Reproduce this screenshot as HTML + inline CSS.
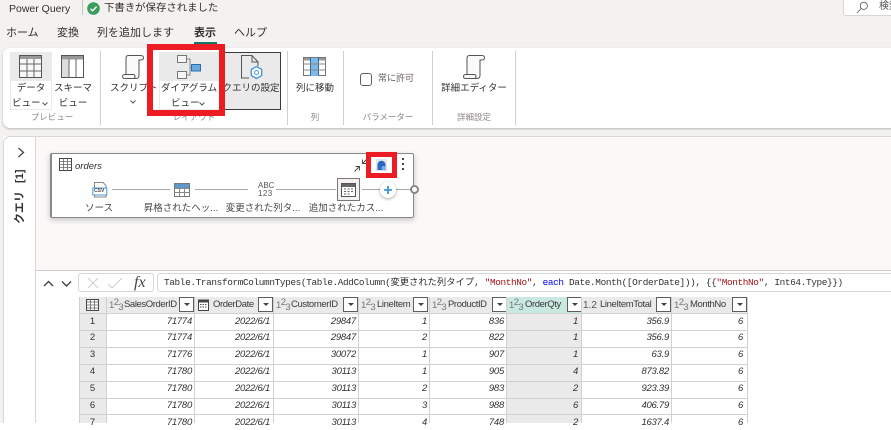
<!DOCTYPE html>
<html lang="ja"><head><meta charset="utf-8">
<style>
html,body{margin:0;padding:0}
body{width:891px;height:423px;overflow:hidden;position:relative;background:#fff;font-family:"Liberation Sans","Noto Sans CJK JP",sans-serif;color:#323130}
.a{position:absolute}
.t{position:absolute;white-space:nowrap;line-height:14px}
.c{text-align:center;transform:translateX(-50%)}
.rb{font-size:9.5px;color:#323130}
.grp{font-size:8.5px;color:#8a8886}
.sep{position:absolute;top:51px;width:1px;height:74px;background:#d0cfce}
.tab{font-size:11px;top:26px;color:#323130}
.red{position:absolute;box-sizing:border-box;border-style:solid;border-color:#ed1c24;z-index:5}
svg{position:absolute;overflow:visible}
.hc{position:absolute;top:297px;height:16px;background:#ebeaea;box-sizing:border-box;border-right:1px solid #d0d0d0;font-size:9.5px;line-height:16px;white-space:nowrap;overflow:hidden}
.hc .ty{position:absolute;left:2px;top:1px;font-size:9.5px;color:#777;letter-spacing:-.6px}
.hc .ty sup{font-size:9.5px;line-height:0;position:relative;top:-3px;vertical-align:baseline}
.hc .ty sub{font-size:9.5px;line-height:0;position:relative;top:2px;vertical-align:baseline}
.hc .n{position:absolute;top:0;letter-spacing:-.4px;color:#3b3a39}
.hc .dd{position:absolute;top:0;width:15px;height:15px;box-sizing:border-box;border:1px solid #605e5c;background:#fff}
.hc .dd:after{content:"";position:absolute;left:3.5px;top:5px;border-left:3px solid transparent;border-right:3px solid transparent;border-top:3px solid #444}
.vl{position:absolute;top:313px;width:1px;height:110px;background:#d0d0d0}
.hl{position:absolute;left:79px;width:669px;height:1px;background:#d0d0d0}
.num{position:absolute;text-align:right;font-size:9.5px;font-style:italic;line-height:14px;color:#323130;white-space:nowrap;letter-spacing:-.25px}
.rn{position:absolute;left:79px;width:27px;text-align:center;font-size:9.5px;line-height:14px;color:#323130}
.step{font-size:9.5px;color:#484644}
</style></head><body>
<!-- top chrome -->
<div class="a" style="left:0;top:0;width:891px;height:136px;background:#f3f2f1"></div>
<div class="t" style="left:9px;top:2px;font-size:10.5px;color:#323130">Power Query</div>
<div class="a" style="left:82px;top:0;width:1px;height:15px;background:#c8c6c4"></div>
<svg style="left:87px;top:2px" width="13" height="13" viewBox="0 0 13 13"><circle cx="6.5" cy="6.5" r="6.3" fill="#3a9d5d"/><path d="M3.5 6.7l2.1 2.1 4-4.2" fill="none" stroke="#fff" stroke-width="1.4"/></svg>
<div class="t" style="left:104px;top:2px;font-size:10.4px;color:#323130">下書きが保存されました</div>
<div class="a" style="left:843px;top:-4px;width:60px;height:20px;background:#fff;border:1px solid #d8d6d4;border-radius:3px;box-sizing:border-box"></div>
<svg style="left:856px;top:1px" width="13" height="13" viewBox="0 0 13 13"><circle cx="7.8" cy="4.8" r="3.6" fill="none" stroke="#666" stroke-width=".9"/><path d="M5.2 7.4L1 12" stroke="#666" stroke-width=".9"/></svg>
<div class="t" style="left:879px;top:0;font-size:10px;color:#555">検索</div>
<div class="t tab" style="left:6px">ホーム</div>
<div class="t tab" style="left:57px">変換</div>
<div class="t tab" style="left:97px">列を追加します</div>
<div class="t tab" style="left:194px;font-weight:700">表示</div>
<div class="a" style="left:194px;top:42px;width:23px;height:2px;background:#117865"></div>
<div class="t tab" style="left:234px">ヘルプ</div>

<!-- ribbon -->
<div class="a" style="left:3px;top:48px;width:900px;height:80px;background:#fff;border-radius:7px 0 0 7px;box-shadow:0 1px 2px rgba(0,0,0,.25)"></div>
<div class="a" style="left:10px;top:52px;width:42px;height:58px;background:#ebeaea"></div>
<div class="a" style="left:11px;top:81px;width:40px;height:28px;background:#fff"></div>
<svg style="left:19px;top:55px" width="24" height="24" viewBox="0 0 24 24"><rect x=".5" y=".5" width="22" height="22" fill="#f8f8f8" stroke="#555"/><rect x="1" y="1" width="21" height="3" fill="#999"/><path d="M1 9h21M1 16h21M8 4v18M15 4v18" stroke="#666"/></svg>
<svg style="left:61px;top:55px" width="24" height="24" viewBox="0 0 24 24"><rect x=".5" y=".5" width="22" height="22" fill="#fff" stroke="#555"/><rect x="1" y="1" width="21" height="3.5" fill="#999"/><rect x="1" y="5" width="7" height="17" fill="#ddd"/><path d="M8 4v18M15 4v18" stroke="#666"/></svg>
<div class="t rb c" style="left:31px;top:82px">データ</div>
<div class="t rb" style="left:12px;top:97px">ビュー</div>
<svg style="left:42px;top:102px" width="6" height="4" viewBox="0 0 6 4"><path d="M.5.5L3 3 5.500.5" fill="none" stroke="#555"/></svg>
<div class="t rb c" style="left:73px;top:82px">スキーマ</div>
<div class="t rb c" style="left:73px;top:97px">ビュー</div>
<div class="t grp c" style="left:52px;top:110px">プレビュー</div>
<div class="sep" style="left:100px"></div>

<svg style="left:122px;top:55px" width="22" height="24" viewBox="0 0 22 24"><path d="M4 3C4 1.500 5 .5 6.500 .5H19c1.500 0 2.500 1 2.500 2.300S20.500 5 19 5H17V20c0 2-1 3.500-3 3.500H2.500C1.200 23.500 .5 22.500 .5 21.500s.7-2 2-2H4Z" fill="#fafafa" stroke="#555"/><path d="M4 19.500H11c1.500 0 2 1 2 2s-.5 2-1.500 2" fill="none" stroke="#555"/></svg>
<div class="t rb" style="left:110px;top:82px">スクリプト</div>
<svg style="left:130px;top:100px" width="6" height="4" viewBox="0 0 6 4"><path d="M.5.5L3 3 5.500.5" fill="none" stroke="#555"/></svg>

<div class="a" style="left:159px;top:52px;width:61px;height:58px;background:#ebeaea"></div>
<div class="a" style="left:160px;top:81px;width:59px;height:28px;background:#fff"></div>
<svg style="left:176px;top:54px" width="27" height="25" viewBox="0 0 27 25"><rect x="1.500" y="1.500" width="9" height="7" fill="#f5f5f5" stroke="#777"/><rect x="1.500" y="17.500" width="9" height="7" fill="#f5f5f5" stroke="#777"/><path d="M11 5h3V21H11M14 13.500H15.500" fill="none" stroke="#888"/><rect x="15.500" y="10.500" width="9" height="6.500" fill="#6aa9e0" stroke="#2a6fb0"/></svg>
<div class="t rb c" style="left:189px;top:82px">ダイアグラム</div>
<div class="t rb" style="left:171px;top:97px">ビュー</div>
<svg style="left:199px;top:102px" width="6" height="4" viewBox="0 0 6 4"><path d="M.5.5L3 3 5.500.5" fill="none" stroke="#555"/></svg>

<div class="a" style="left:220px;top:52px;width:61px;height:58px;box-sizing:border-box;background:#ebeaea;border:1px solid #3b3a39;border-left:0"></div>
<svg style="left:241px;top:55px" width="24" height="26" viewBox="0 0 24 26"><path d="M8 23H.5V.5H11L17 7V11" fill="none" stroke="#555"/><path d="M11 .5V7H17" fill="none" stroke="#555"/><path d="M15.500 11.500L20.700 14.500V20.500L15.500 23.500 10.300 20.500V14.500Z" fill="#fff" stroke="#4a9ad4" stroke-width="1.400" stroke-linejoin="round"/><circle cx="15.500" cy="17.500" r="2" fill="none" stroke="#4a9ad4"/></svg>
<div class="t rb c" style="left:251px;top:82px">クエリの設定</div>
<div class="t grp c" style="left:194px;top:110px">レイアウト</div>
<div class="sep" style="left:287px"></div>

<svg style="left:303px;top:57px" width="24" height="20" viewBox="0 0 24 20"><rect x=".5" y=".5" width="22" height="18" fill="#fff" stroke="#777"/><rect x="1" y="1" width="21" height="2.500" fill="#999"/><rect x="7.500" y="1" width="8" height="18" fill="#7fb8e6"/><path d="M7.500 .5v18M15.500 .5v18" stroke="#1f6fb5"/><path d="M1 7h21M1 13h21" stroke="#888"/></svg>
<div class="t rb c" style="left:315px;top:82px">列に移動</div>
<div class="t grp c" style="left:315px;top:110px">列</div>
<div class="sep" style="left:343px"></div>

<div class="a" style="left:360px;top:73px;width:12px;height:13px;box-sizing:border-box;border:1px solid #605e5c;border-radius:3px"></div>
<div class="t" style="left:378px;top:71px;font-size:9px;color:#605e5c">常に許可</div>
<div class="t grp c" style="left:388px;top:110px">パラメーター</div>
<div class="sep" style="left:432px"></div>

<svg style="left:463px;top:55px" width="22" height="24" viewBox="0 0 22 24"><path d="M4 3C4 1.500 5 .5 6.500 .5H19c1.500 0 2.500 1 2.500 2.300S20.500 5 19 5H17V20c0 2-1 3.500-3 3.500H2.500C1.200 23.500 .5 22.500 .5 21.500s.7-2 2-2H4Z" fill="#fafafa" stroke="#555"/><path d="M4 19.500H11c1.500 0 2 1 2 2s-.5 2-1.500 2" fill="none" stroke="#555"/></svg>
<div class="t rb c" style="left:474px;top:82px">詳細エディター</div>
<div class="t grp c" style="left:474px;top:110px">詳細設定</div>
<div class="sep" style="left:515px"></div>

<!-- red boxes -->
<div class="red" style="left:147px;top:44px;width:78px;height:72px;border-width:6px"></div>
<div class="red" style="left:366px;top:152px;width:31px;height:26px;border-width:5px"></div>

<!-- side panel + diagram bg -->
<div class="a" style="left:0;top:136px;width:3px;height:287px;background:#f3f2f1"></div>
<div class="a" style="left:3px;top:136px;width:33px;height:287px;background:#fff;border-radius:7px 0 0 0;border-top:1px solid #d8d6d4;border-left:1px solid #d8d6d4;border-right:1px solid #d8d6d4;box-sizing:border-box"></div>
<div class="a" style="left:36px;top:136px;width:855px;height:134px;background:#faf9f8;border-top:1px solid #d8d6d4;box-sizing:border-box"></div>
<div class="a" style="left:36px;top:270px;width:855px;height:1px;background:#d0cfce"></div>
<svg style="left:17px;top:147px" width="8" height="11" viewBox="0 0 8 11"><path d="M1.500 1l5 4.500-5 4.500" fill="none" stroke="#444" stroke-width="1.300"/></svg>
<div class="t" style="left:13px;top:224px;font-size:11px;font-weight:700;color:#323130;transform-origin:0 0;transform:rotate(-90deg);line-height:14px;word-spacing:5px">クエリ [1]</div>

<!-- query card -->
<div class="a" style="left:50px;top:153px;width:364px;height:65px;box-sizing:border-box;background:#fff;border:1px solid #8a8886;border-left:2px solid #8a8886;border-radius:2px;box-shadow:0 2px 6px rgba(0,0,0,.22)"></div>
<svg style="left:59px;top:158px" width="13" height="13" viewBox="0 0 13 13"><rect x=".5" y=".5" width="12" height="12" fill="#fff" stroke="#444"/><path d="M.5 3.500h12M.5 6.500h12M.5 9.500h12M4.500 .5v12M8.500 .5v12" stroke="#666" stroke-width=".8"/></svg>
<div class="t" style="left:75px;top:160px;font-size:9.500px;font-style:italic;color:#323130">orders</div>
<svg style="left:92px;top:182px" width="16" height="16" viewBox="0 0 16 16"><path d="M2.500.5H11L14 3.500V15H2.500Z" fill="#fff" stroke="#888"/><rect x=".8" y="6" width="14" height="7" fill="#fff" stroke="#4a9ad4"/></svg>
<div class="t" style="left:94px;top:188px;font-size:5px;font-weight:700;color:#444;line-height:7px">CSV</div>
<div class="a" style="left:112px;top:189px;width:58px;height:1px;background:#a8a8a8"></div>
<svg style="left:174px;top:183px" width="16" height="14" viewBox="0 0 16 14"><rect x=".5" y=".5" width="15" height="13" fill="#fff" stroke="#777"/><rect x="1" y="1" width="14" height="4.500" fill="#5a9bd5"/><path d="M.5 5.500h15M.5 9.500h15M5.500 .5v13M10.500 .5v13" stroke="#888"/></svg>
<div class="a" style="left:195px;top:189px;width:53px;height:1px;background:#a8a8a8"></div>
<div class="t" style="left:258px;top:182px;font-size:8px;line-height:8px;color:#555">ABC</div>
<div class="t" style="left:258px;top:190px;font-size:8px;line-height:8px;color:#555;letter-spacing:.4px">123</div>
<div class="a" style="left:276px;top:189px;width:60px;height:1px;background:#a8a8a8"></div>
<div class="a" style="left:337px;top:178px;width:23px;height:23px;box-sizing:border-box;border:1px solid #777;background:#f3f2f1"></div>
<svg style="left:341px;top:182px" width="15" height="15" viewBox="0 0 15 15"><rect x=".5" y="1.500" width="14" height="13" fill="#fff" stroke="#555"/><rect x="1" y="2" width="13" height="3" fill="#666"/><path d="M3 7h2M6.500 7h2M10 7h2M3 9.500h2M6.500 9.500h2M10 9.500h2M3 12h2M6.500 12h2" stroke="#666"/></svg>
<div class="a" style="left:362px;top:189px;width:48px;height:1px;background:#a8a8a8"></div>
<div class="a" style="left:380px;top:182px;width:16px;height:16px;border-radius:50%;background:#fff;box-shadow:0 1px 3px rgba(0,0,0,.35)"></div>
<svg style="left:384px;top:186px" width="8" height="8" viewBox="0 0 8 8"><path d="M4 0v8M0 4h8" stroke="#3a96dd" stroke-width="1.800"/></svg>
<div class="a" style="left:410px;top:185px;width:9px;height:9px;border-radius:50%;box-sizing:border-box;border:2px solid #8a8886;background:#fff"></div>
<div class="t step c" style="left:99px;top:202px">ソース</div>
<div class="t step c" style="left:181px;top:202px">昇格されたヘッ...</div>
<div class="t step c" style="left:263px;top:202px">変更された列タ...</div>
<div class="t step c" style="left:346px;top:202px">追加されたカス...</div>
<svg style="left:354px;top:158px" width="14" height="14" viewBox="0 0 14 14"><path d="M.5 13.500L5.500 8.500M1.500 8.500H5.500V12.500M13.500 .5L8.500 5.500M8.500 1.500V5.500H12.500" fill="none" stroke="#444" stroke-width=".9"/></svg>
<div class="a" style="left:376px;top:159px;width:11px;height:12px;background:#e6e5e4"></div>
<svg style="left:376px;top:160px" width="11" height="11" viewBox="0 0 11 11"><path d="M1.500 10V5C1.500 2.500 3.500 .8 5.500 .8S9.500 2.500 9.500 5V10Z" fill="#2a66c4"/><circle cx="7.500" cy="8" r="2" fill="#7eaee8"/></svg>
<div class="a" style="left:402px;top:158px;width:2px;height:2px;background:#444"></div>
<div class="a" style="left:402px;top:163px;width:2px;height:2px;background:#444"></div>
<div class="a" style="left:402px;top:168px;width:2px;height:2px;background:#444"></div>

<!-- formula bar -->
<svg style="left:43px;top:279px" width="30" height="9" viewBox="0 0 30 9"><path d="M1 7l4.500-4.500L10 7M19 2.500L23.500 7 28 2.500" fill="none" stroke="#444" stroke-width="1.400"/></svg>
<div class="a" style="left:78px;top:273px;width:76px;height:19px;box-sizing:border-box;border:1px solid #d8d6d4;border-radius:3px;background:#fff"></div>
<svg style="left:87px;top:277px" width="40" height="12" viewBox="0 0 40 12"><path d="M1 1l10 10M11 1L1 11M21 7l4 4 10-10" fill="none" stroke="#d0cfce"/></svg>
<div class="t" style="left:134px;top:276px;font-family:'Liberation Serif',serif;font-style:italic;font-size:16px;color:#444">fx</div>
<div class="a" style="left:157px;top:273px;width:740px;height:19px;box-sizing:border-box;border:1px solid #d8d6d4;border-radius:3px;background:#fff"></div>
<div class="t" style="left:164px;top:276px;font-family:'Liberation Mono','Noto Sans CJK JP',monospace;font-size:9.400px;letter-spacing:-.36px;color:#323130">Table.TransformColumnTypes(Table.AddColumn(<span style="font-size:9.300px;letter-spacing:0">変更された列タイプ</span>, <span style="color:#a31515">"MonthNo"</span>, <span style="color:#0000ff">each</span> Date.Month([OrderDate])), {{<span style="color:#a31515">"MonthNo"</span>, Int64.Type}})</div>

<!-- grid -->
<div class="a" style="left:79px;top:297px;width:28px;height:126px;background:#ebeaea"></div>
<div class="a" style="left:507px;top:313px;width:74px;height:110px;background:#ebeaea"></div>
<div class="hc" style="left:79px;width:28px"></div>
<svg style="left:86px;top:299px" width="13" height="12" viewBox="0 0 13 12"><rect x=".5" y=".5" width="12" height="11" fill="#fff" stroke="#444"/><path d="M.5 3h12M.5 6h12M.5 9h12M4.500 .5v11M8.500 .5v11" stroke="#666" stroke-width=".8"/></svg>

<div class="hc" style="left:107px;width:88px"><span class="ty">1<sup>2</sup><sub>3</sub></span><span class="n" style="left:17px">SalesOrderID</span><span class="dd" style="left:72px"></span></div>
<div class="hc" style="left:195px;width:79px"><span class="n" style="left:18px">OrderDate</span><span class="dd" style="left:63px"></span></div>
<svg style="left:198px;top:299px" width="11" height="12" viewBox="0 0 11 12"><rect x=".5" y="1" width="10" height="10.500" fill="#fff" stroke="#444"/><rect x="1" y="1" width="9" height="2.500" fill="#444"/><path d="M2 5.500h1.500M4.500 5.500h1.500M7 5.500h1.500M2 8h1.500M4.500 8h1.500M7 8h1.500" stroke="#555"/></svg>
<div class="hc" style="left:274px;width:85px"><span class="ty">1<sup>2</sup><sub>3</sub></span><span class="n" style="left:17px">CustomerID</span><span class="dd" style="left:69px"></span></div>
<div class="hc" style="left:359px;width:71px"><span class="ty">1<sup>2</sup><sub>3</sub></span><span class="n" style="left:18px">LineItem</span><span class="dd" style="left:54px"></span></div>
<div class="hc" style="left:430px;width:77px"><span class="ty">1<sup>2</sup><sub>3</sub></span><span class="n" style="left:18px">ProductID</span><span class="dd" style="left:62px"></span></div>
<div class="hc" style="left:507px;width:75px;background:#c9e9e0"><span class="ty">1<sup>2</sup><sub>3</sub></span><span class="n" style="left:18px">OrderQty</span><span class="dd" style="left:60px"></span></div>
<div class="hc" style="left:582px;width:90px"><span class="ty" style="font-size:10px;letter-spacing:0;left:1px;color:#555">1.2</span><span class="n" style="left:18px">LineItemTotal</span><span class="dd" style="left:74px"></span></div>
<div class="hc" style="left:672px;width:76px"><span class="ty">1<sup>2</sup><sub>3</sub></span><span class="n" style="left:18px">MonthNo</span><span class="dd" style="left:60px"></span></div>

<div class="hl" style="top:313px"></div><div class="hl" style="top:330px"></div><div class="hl" style="top:347px"></div><div class="hl" style="top:364px"></div><div class="hl" style="top:381px"></div><div class="hl" style="top:398px"></div><div class="hl" style="top:414px"></div>
<div class="vl" style="left:106px"></div><div class="vl" style="left:194px"></div><div class="vl" style="left:273px"></div><div class="vl" style="left:358px"></div><div class="vl" style="left:429px"></div><div class="vl" style="left:506px"></div><div class="vl" style="left:581px"></div><div class="vl" style="left:671px"></div><div class="vl" style="left:747px"></div>
<div class="a" style="left:79px;top:297px;width:1px;height:126px;background:#d0d0d0"></div>

<div class="rn" style="top:315px">1</div><div class="rn" style="top:331px">2</div><div class="rn" style="top:348px">3</div><div class="rn" style="top:365px">4</div><div class="rn" style="top:382px">5</div><div class="rn" style="top:399px">6</div><div class="rn" style="top:416px">7</div>

<!-- rows -->
<div class="num" style="right:699px;top:315px">71774</div><div class="num" style="right:621px;top:315px">2022/6/1</div><div class="num" style="right:535px;top:315px">29847</div><div class="num" style="right:464px;top:315px">1</div><div class="num" style="right:387px;top:315px">836</div><div class="num" style="right:313px;top:315px">1</div><div class="num" style="right:222px;top:315px">356.9</div><div class="num" style="right:148px;top:315px">6</div>
<div class="num" style="right:699px;top:331px">71774</div><div class="num" style="right:621px;top:331px">2022/6/1</div><div class="num" style="right:535px;top:331px">29847</div><div class="num" style="right:464px;top:331px">2</div><div class="num" style="right:387px;top:331px">822</div><div class="num" style="right:313px;top:331px">1</div><div class="num" style="right:222px;top:331px">356.9</div><div class="num" style="right:148px;top:331px">6</div>
<div class="num" style="right:699px;top:348px">71776</div><div class="num" style="right:621px;top:348px">2022/6/1</div><div class="num" style="right:535px;top:348px">30072</div><div class="num" style="right:464px;top:348px">1</div><div class="num" style="right:387px;top:348px">907</div><div class="num" style="right:313px;top:348px">1</div><div class="num" style="right:222px;top:348px">63.9</div><div class="num" style="right:148px;top:348px">6</div>
<div class="num" style="right:699px;top:365px">71780</div><div class="num" style="right:621px;top:365px">2022/6/1</div><div class="num" style="right:535px;top:365px">30113</div><div class="num" style="right:464px;top:365px">1</div><div class="num" style="right:387px;top:365px">905</div><div class="num" style="right:313px;top:365px">4</div><div class="num" style="right:222px;top:365px">873.82</div><div class="num" style="right:148px;top:365px">6</div>
<div class="num" style="right:699px;top:382px">71780</div><div class="num" style="right:621px;top:382px">2022/6/1</div><div class="num" style="right:535px;top:382px">30113</div><div class="num" style="right:464px;top:382px">2</div><div class="num" style="right:387px;top:382px">983</div><div class="num" style="right:313px;top:382px">2</div><div class="num" style="right:222px;top:382px">923.39</div><div class="num" style="right:148px;top:382px">6</div>
<div class="num" style="right:699px;top:399px">71780</div><div class="num" style="right:621px;top:399px">2022/6/1</div><div class="num" style="right:535px;top:399px">30113</div><div class="num" style="right:464px;top:399px">3</div><div class="num" style="right:387px;top:399px">988</div><div class="num" style="right:313px;top:399px">6</div><div class="num" style="right:222px;top:399px">406.79</div><div class="num" style="right:148px;top:399px">6</div>
<div class="num" style="right:699px;top:416px">71780</div><div class="num" style="right:621px;top:416px">2022/6/1</div><div class="num" style="right:535px;top:416px">30113</div><div class="num" style="right:464px;top:416px">4</div><div class="num" style="right:387px;top:416px">748</div><div class="num" style="right:313px;top:416px">2</div><div class="num" style="right:222px;top:416px">1637.4</div><div class="num" style="right:148px;top:416px">6</div>
</body></html>
